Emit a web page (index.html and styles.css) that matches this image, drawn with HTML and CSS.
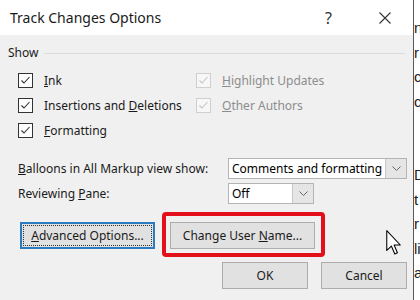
FILE: index.html
```html
<!DOCTYPE html>
<html lang="en">
<head>
  <meta charset="UTF-8" />
  <title>Track Changes Options</title>
  <link rel="stylesheet" href="styles.css">
</head>
<body>
  <div class="screen">
    <div class="dialog">
      <div class="titlebar">
        <span class="title">Track Changes Options</span>
        <span class="tb-help">?</span>
        <span class="tb-close">
          <svg width="12" height="12" viewBox="0 0 12 12"><path d="M0.5 0.5 L11.5 11.5 M11.5 0.5 L0.5 11.5" stroke="#333" stroke-width="1.1" fill="none"/></svg>
        </span>
      </div>

      <div class="content">
        <div class="group-head"><span>Show</span><span class="group-line"></span></div>

        <div class="checks">
          <label class="check"><span class="box"><svg width="11" height="11" viewBox="0 0 11 11"><path d="M1.5 5.5 L4 8 L9.5 2" stroke="#333" stroke-width="1.1" fill="none"/></svg></span><span><u>I</u>nk</span></label>
          <label class="check disabled"><span class="box"><svg width="11" height="11" viewBox="0 0 11 11"><path d="M1.5 5.5 L4 8 L9.5 2" stroke="#c4c4c4" stroke-width="1.1" fill="none"/></svg></span><span><u>H</u>ighlight Updates</span></label>
          <label class="check"><span class="box"><svg width="11" height="11" viewBox="0 0 11 11"><path d="M1.5 5.5 L4 8 L9.5 2" stroke="#333" stroke-width="1.1" fill="none"/></svg></span><span>Insertions and <u>D</u>eletions</span></label>
          <label class="check disabled"><span class="box"><svg width="11" height="11" viewBox="0 0 11 11"><path d="M1.5 5.5 L4 8 L9.5 2" stroke="#c4c4c4" stroke-width="1.1" fill="none"/></svg></span><span><u>O</u>ther Authors</span></label>
          <label class="check"><span class="box"><svg width="11" height="11" viewBox="0 0 11 11"><path d="M1.5 5.5 L4 8 L9.5 2" stroke="#333" stroke-width="1.1" fill="none"/></svg></span><span><u>F</u>ormatting</span></label>
        </div>

        <div class="fields">
          <div class="field">
            <span class="field-label"><u>B</u>alloons in All Markup view show:</span>
            <span class="select select-wide">
              <span class="select-value">Comments and formatting</span>
              <span class="select-btn"><svg width="9" height="5" viewBox="0 0 9 5"><path d="M0.5 0.5 L4.5 4.5 L8.5 0.5" stroke="#666" fill="none"/></svg></span>
            </span>
          </div>
          <div class="field">
            <span class="field-label">Reviewing <u>P</u>ane:</span>
            <span class="select select-small">
              <span class="select-value">Off</span>
              <span class="select-btn"><svg width="9" height="5" viewBox="0 0 9 5"><path d="M0.5 0.5 L4.5 4.5 L8.5 0.5" stroke="#666" fill="none"/></svg></span>
            </span>
          </div>
        </div>

        <div class="actions">
          <button class="btn btn-advanced"><span class="focus-ring"><u>A</u>dvanced Options...</span></button>
          <span class="highlight"><button class="btn btn-user">Change User <u>N</u>ame...</button></span>
        </div>

        <div class="footer">
          <button class="btn btn-dialog">OK</button>
          <button class="btn btn-dialog">Cancel</button>
        </div>
      </div>

      <svg class="cursor" width="16" height="25" viewBox="0 0 12 19">
        <path d="M0.5 0.5 L0.5 15.5 L4 12.2 L6.6 18.2 L8.6 17.3 L6.1 11.4 L10.8 11.4 Z" fill="#fff" stroke="#000" stroke-width="0.8" stroke-linejoin="round"/>
      </svg>
    </div>

    <div class="doc">
      <p>n</p>
      <p>r</p>
      <p>c</p>
      <p>c</p>
      <p>&nbsp;</p>
      <p>&nbsp;</p>
      <p>D</p>
      <p>t</p>
      <p>r</p>
      <p>li</p>
      <p>a</p>
    </div>
  </div>
</body>
</html>
```

FILE: styles.css
```css
body {
  margin: 0;
  background: #fff;
  font-family: 'Noto Sans', 'Open Sans', sans-serif;
  font-size: 12px;
  color: #000;
}
.screen {
  display: flex;
  width: 420px;
  height: 300px;
  overflow: hidden;
}
.dialog {
  position: relative;
  width: 413px;
  flex-shrink: 0;
  background: #f0f0f0;
  border-right: 1px solid #5a5a5a;
}
.titlebar {
  display: flex;
  align-items: center;
  height: 35px;
  background: #fff;
  padding-left: 10px;
}
.title {
  font-size: 14px;
  color: #1a1a1a;
  flex: 1;
}
.tb-help {
  font-size: 16px;
  color: #333;
  margin-right: 47px;
}
.tb-close {
  display: flex;
  margin-right: 22px;
}
.content {
  padding: 10px 6px 0 8px;
}
.group-head {
  display: flex;
  align-items: center;
  gap: 6px;
  line-height: 16px;
  color: #1a1a1a;
}
.group-line {
  flex: 1;
  height: 1px;
  background: #dcdcdc;
  margin-right: 2px;
}
.checks {
  display: grid;
  grid-template-columns: 178px auto;
  grid-auto-rows: 25px;
  margin: 7px 0 0 10px;
}
.check {
  display: flex;
  align-items: center;
  gap: 11px;
  color: #1a1a1a;
}
.check .box {
  display: flex;
  align-items: center;
  justify-content: center;
  width: 13px;
  height: 13px;
  border: 1px solid #333;
  background: #fff;
}
.check.disabled {
  color: #8d8d8d;
}
.check.disabled .box {
  border-color: #cfcfcf;
  background: #f7f7f7;
}
.fields {
  display: flex;
  flex-direction: column;
  gap: 4px;
  margin: 15px 0 0 10px;
}
.field {
  display: flex;
  align-items: center;
}
.field-label {
  width: 210px;
  color: #1a1a1a;
}
.select {
  display: flex;
  height: 21px;
  box-sizing: border-box;
  border: 1px solid #b4b4b4;
  background: #fff;
}
.select-wide {
  width: 179px;
}
.select-small {
  width: 86px;
}
.select-value {
  flex: 1;
  padding-left: 3px;
  line-height: 19px;
  white-space: nowrap;
  overflow: hidden;
}
.select-btn {
  display: flex;
  align-items: center;
  justify-content: center;
  width: 20px;
  background: #e5e5e5;
  border-left: 1px solid #c8c8c8;
}
.btn {
  font: inherit;
  color: #1a1a1a;
  height: 27px;
  box-sizing: border-box;
  background: #e1e1e1;
  border: 1px solid #adadad;
  padding: 0;
}
.actions {
  display: flex;
  align-items: flex-start;
  margin-top: 8px;
  padding-left: 12px;
}
.btn-advanced {
  width: 135px;
  margin-top: 10px;
  border: 2px solid #2a7bc0;
  padding: 1px;
}
.focus-ring {
  display: block;
  height: 100%;
  box-sizing: border-box;
  border: 1px dotted #333;
  line-height: 19px;
}
.highlight {
  display: block;
  margin-left: 7px;
  padding: 6px 6px 4px 4px;
  border: 4px solid #e3101b;
  border-radius: 4px;
}
.btn-user {
  display: block;
  width: 145px;
}
.footer {
  display: flex;
  justify-content: flex-end;
  gap: 13px;
  margin-top: 5px;
}
.btn-dialog {
  width: 86px;
}
.cursor {
  position: absolute;
  left: 386px;
  top: 230px;
}
.doc {
  flex: 1;
  padding-top: 16px;
  font-family: 'Liberation Sans', sans-serif;
  font-size: 15px;
  color: #222;
}
.doc p {
  margin: 0;
  line-height: 24.5px;
}
```
